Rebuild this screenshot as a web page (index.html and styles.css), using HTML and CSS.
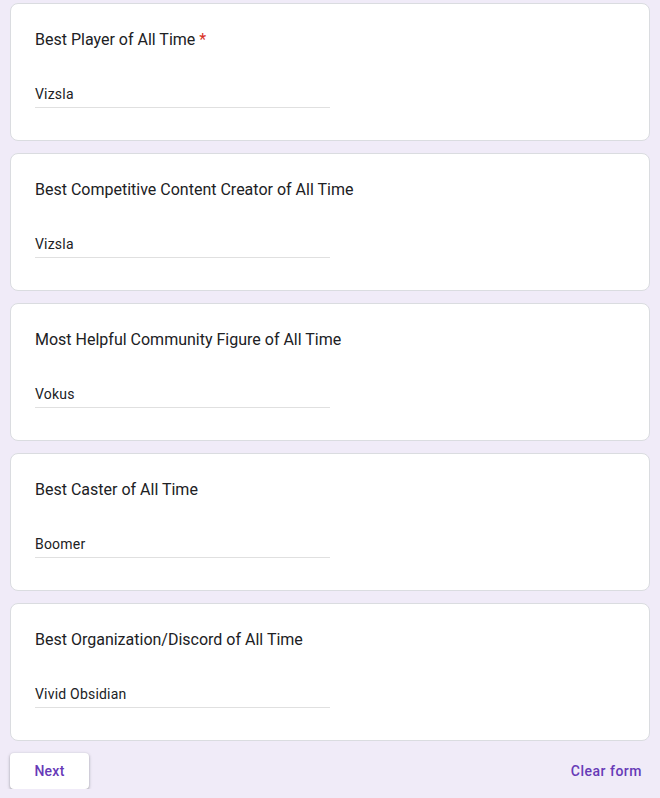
FILE: index.html
```html
<!DOCTYPE html>
<html lang="en">
<head>
<meta charset="utf-8">
<title>Form</title>
<link rel="stylesheet" href="styles.css">
</head>
<body>
<main class="form">
  <section class="card">
    <div class="q-title">Best Player of All Time<span class="req">*</span></div>
    <div class="answer"><span class="answer-text">Vizsla</span></div>
  </section>
  <section class="card">
    <div class="q-title">Best Competitive Content Creator of All Time</div>
    <div class="answer"><span class="answer-text">Vizsla</span></div>
  </section>
  <section class="card">
    <div class="q-title">Most Helpful Community Figure of All Time</div>
    <div class="answer"><span class="answer-text">Vokus</span></div>
  </section>
  <section class="card">
    <div class="q-title">Best Caster of All Time</div>
    <div class="answer"><span class="answer-text">Boomer</span></div>
  </section>
  <section class="card">
    <div class="q-title">Best Organization/Discord of All Time</div>
    <div class="answer"><span class="answer-text">Vivid Obsidian</span></div>
  </section>
  <div class="actions">
    <button class="btn-next" type="button">Next</button>
    <button class="btn-clear" type="button">Clear form</button>
  </div>
</main>
</body>
</html>
```
FILE: styles.css
```css
html, body {
  margin: 0;
  padding: 0;
  background: #f0ebf8;
}
body {
  font-family: Roboto, "Liberation Sans", Arial, sans-serif;
  color: #202124;
}
.form {
  display: flex;
  flex-direction: column;
  gap: 12px;
  padding: 3px 10px 0 10px;
}
.card {
  background: #fff;
  border: 1px solid #dadce0;
  border-radius: 8px;
  padding: 24px 24px 32px 24px;
  display: flex;
  flex-direction: column;
  gap: 32px;
}
.q-title {
  font-size: 16px;
  line-height: 24px;
  letter-spacing: 0;
  color: #202124;
}
.req {
  color: #d93025;
  padding-left: 4px;
}
.answer {
  width: 50%;
  border-bottom: 1px solid #e0e0e0;
  padding-bottom: 3px;
}
.answer-text {
  display: block;
  font-size: 14px;
  line-height: 20px;
  letter-spacing: 0.2px;
  color: #202124;
}
.actions {
  display: flex;
  justify-content: space-between;
  align-items: center;
}
.btn-next {
  font-family: inherit;
  font-size: 14px;
  font-weight: 500;
  letter-spacing: 0.25px;
  color: #673ab7;
  background: #fff;
  border: none;
  border-radius: 4px;
  height: 36px;
  width: 79px;
  padding: 0;
  box-shadow: 0 1px 2px 0 rgba(60,64,67,0.3), 0 1px 3px 1px rgba(60,64,67,0.15);
}
.btn-clear {
  font-family: inherit;
  font-size: 14px;
  font-weight: 500;
  letter-spacing: 0.5px;
  color: #673ab7;
  background: transparent;
  border: none;
  height: 36px;
  padding: 0 8px;
}
```
